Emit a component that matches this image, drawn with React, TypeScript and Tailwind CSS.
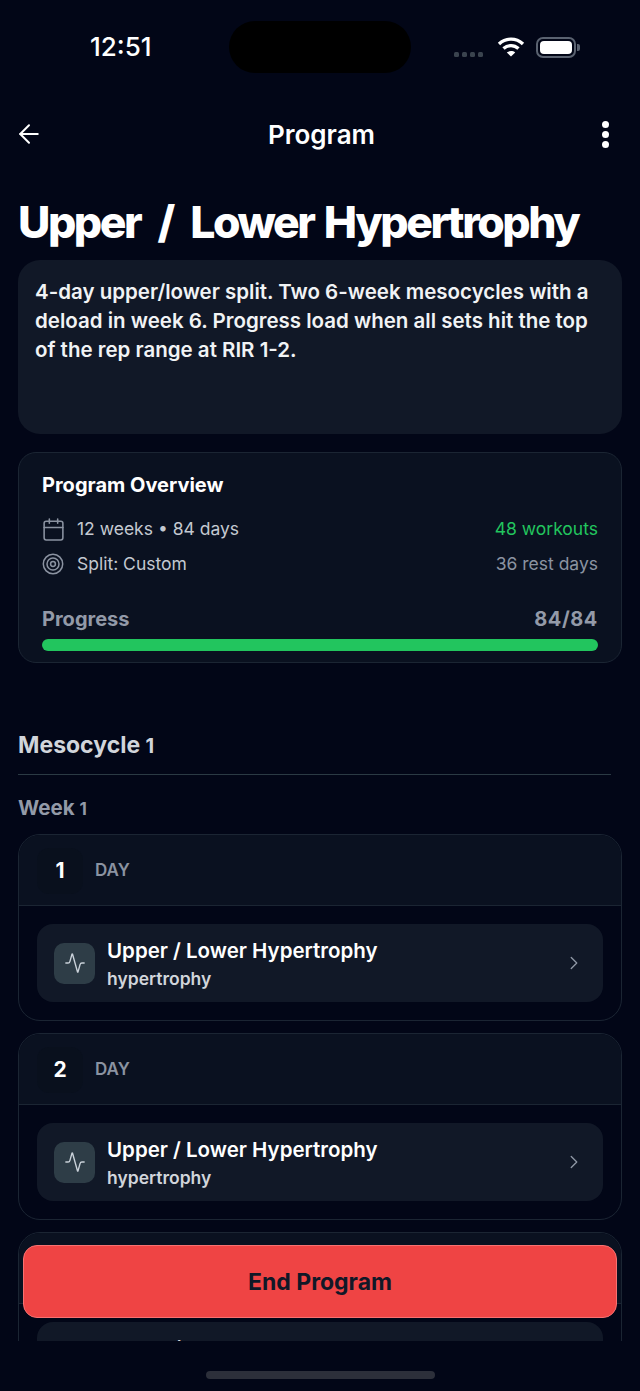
import { ArrowLeft, Calendar, ChevronRight, Activity } from "lucide-react";

function Target() {
  return (
    <svg width="22" height="22" viewBox="0 0 22 22" fill="none" stroke="#8b93a1" strokeWidth="1.5">
      <circle cx="11" cy="11" r="9.7" />
      <circle cx="11" cy="11" r="6" />
      <circle cx="11" cy="11" r="2.4" />
    </svg>
  );
}

function StatusBar() {
  return (
    <div className="relative h-[94px] shrink-0">
      <span className="absolute left-[90px] top-[32px] text-[26px] leading-[30px] font-medium text-white font-['Inter',sans-serif]">12:51</span>
      <div className="absolute left-[229px] top-[21px] w-[182px] h-[52px] rounded-[26px] bg-black" />
      <div className="absolute left-[454px] top-[52px] flex gap-[3px]">
        <div className="w-[5px] h-[5px] rounded-[1.5px] bg-[#3a434e]" />
        <div className="w-[5px] h-[5px] rounded-[1.5px] bg-[#3a434e]" />
        <div className="w-[5px] h-[5px] rounded-[1.5px] bg-[#3a434e]" />
        <div className="w-[5px] h-[5px] rounded-[1.5px] bg-[#3a434e]" />
      </div>
      <svg className="absolute left-[497px] top-[36px]" width="28" height="22" viewBox="0 0 28 22" fill="none" stroke="white" strokeWidth="3.4">
        <path d="M2 8 C9 1.5 19 1.5 26 8" />
        <path d="M6.5 12.6 C11 8.6 17 8.6 21.5 12.6" />
        <path d="M14 20.5 L9.8 16.5 C12 14.6 16 14.6 18.2 16.5 Z" fill="white" stroke="none" />
      </svg>
      <div className="absolute left-[536px] top-[37px] w-[40px] h-[21px] rounded-[7px] border-2 border-[#5a6270] p-[2px]">
        <div className="w-full h-full rounded-[4px] bg-white" />
      </div>
      <div className="absolute left-[577px] top-[44px] w-[3px] h-[7px] rounded-r-[2px] bg-[#5a6270]" />
    </div>
  );
}

function DayCard({ day }: { day: number }) {
  return (
    <div className="mx-[18px] mb-[12px] rounded-[22px] border border-[#1b2533] overflow-hidden shrink-0">
      <div className="h-[71px] pt-[1px] flex items-center pl-[18px] gap-[12px] bg-[#0a1120] border-b border-[#1b2533]">
        <span className="w-[46px] h-[46px] rounded-[12px] bg-[#09101d] flex items-center justify-center text-[21px] font-bold text-white">{day}</span>
        <span className="text-[17px] font-semibold text-[#8b93a1]">DAY</span>
      </div>
      <div className="p-[18px]">
        <div className="h-[78px] rounded-[16px] bg-[#111827] flex items-center pl-[17px] pr-[18px]">
          <div className="w-[41px] h-[41px] rounded-[10px] bg-[#2e3d47] flex items-center justify-center">
            <Activity size={22} strokeWidth={1.5} color="#c9d1d9" />
          </div>
          <div className="ml-[12px] pt-[3px] flex-1">
            <div className="text-[20.5px] leading-[26px] font-semibold text-white">Upper / Lower Hypertrophy</div>
            <div className="mt-[3px] text-[17.5px] leading-[24px] font-semibold text-[#d1d5db]">hypertrophy</div>
          </div>
          <ChevronRight size={22} strokeWidth={1.5} color="#8b93a1" />
        </div>
      </div>
    </div>
  );
}

export default function App() {
  return (
    <div className="relative w-[640px] h-[1391px] overflow-hidden bg-[#020617] font-['Inter',sans-serif]">
      <div className="h-[1341px] overflow-hidden flex flex-col">
        <StatusBar />
        <div className="h-[80px] shrink-0 flex items-center justify-between pl-[14px] pr-[31px]">
          <ArrowLeft size={30} strokeWidth={1.6} color="white" />
          <span className="mr-[3px] text-[26px] font-semibold text-white">Program</span>
          <div className="flex flex-col gap-[3px]">
            <div className="w-[7px] h-[7px] rounded-full bg-white" />
            <div className="w-[7px] h-[7px] rounded-full bg-white" />
            <div className="w-[7px] h-[7px] rounded-full bg-white" />
          </div>
        </div>
        <h1 className="shrink-0 mt-[22px] ml-[18px] text-[44.5px] leading-[52px] font-extrabold tracking-[-0.055em] text-white whitespace-nowrap">
          Upper <span className="mx-[10px]">/</span> Lower <span className="ml-[3px]">Hypertrophy</span>
        </h1>
        <div className="shrink-0 mx-[18px] mt-[12px] h-[174px] rounded-[22px] bg-[#111827] px-[17px] py-[17px] text-[20.5px] leading-[29px] font-semibold text-[#f1f3f5]">
          4-day upper/lower split. Two 6-week mesocycles with a deload in week 6. Progress load when all sets hit the top of the rep range at RIR 1-2.
        </div>
        <div className="shrink-0 mx-[18px] mt-[18px] h-[211px] rounded-[18px] border border-[#1b2533] bg-[#0a1120] px-[23px] pt-[19px]">
          <div className="text-[20px] leading-[26px] font-bold text-white">Program Overview</div>
          <div className="mt-[20px] h-[22px] flex items-center justify-between text-[17.5px]">
            <div className="flex items-center gap-[11px] text-[#c4c9d1]">
              <Calendar size={25} strokeWidth={1.5} color="#8b93a1" className="-ml-[1px]" />
              12 weeks • 84 days
            </div>
            <span className="text-[#22c55e]">48 workouts</span>
          </div>
          <div className="mt-[13px] h-[22px] flex items-center justify-between text-[17.5px]">
            <div className="flex items-center gap-[13px] text-[#c4c9d1]">
              <Target />
              Split: Custom
            </div>
            <span className="text-[#8b93a1]">36 rest days</span>
          </div>
          <div className="mt-[32px] flex justify-between text-[20px] leading-[24px] font-bold text-[#939aa8]">
            <span>Progress</span>
            <span className="tracking-[0.03em]">84/84</span>
          </div>
          <div className="mt-[8px] h-[12px] rounded-full bg-[#22c55e]" />
        </div>
        <div className="shrink-0 ml-[18px] mt-[66px] text-[23px] leading-[32px] font-bold text-[#d1d5db]">
          Mesocycle <span className="text-[20px]">1</span>
        </div>
        <div className="shrink-0 ml-[18px] mr-[29px] mt-[12px] h-px bg-[#2b3a44]" />
        <div className="shrink-0 ml-[18px] mt-[20px] text-[20.5px] leading-[26px] font-bold text-[#939aa8]">
          Week <span className="text-[17px]">1</span>
        </div>
        <div className="shrink-0 mt-[12px]">
          <DayCard day={1} />
          <DayCard day={2} />
          <DayCard day={3} />
        </div>
      </div>
      <button className="absolute left-[23px] top-[1245px] w-[594px] h-[73px] pt-[1px] rounded-[14px] bg-[#ef4444] border border-[#f87171] text-[23px] font-bold text-[#111827]">
        End Program
      </button>
      <div className="absolute left-[206px] bottom-[12px] w-[229px] h-[8px] rounded-full bg-[#2c2f3a]" />
    </div>
  );
}
